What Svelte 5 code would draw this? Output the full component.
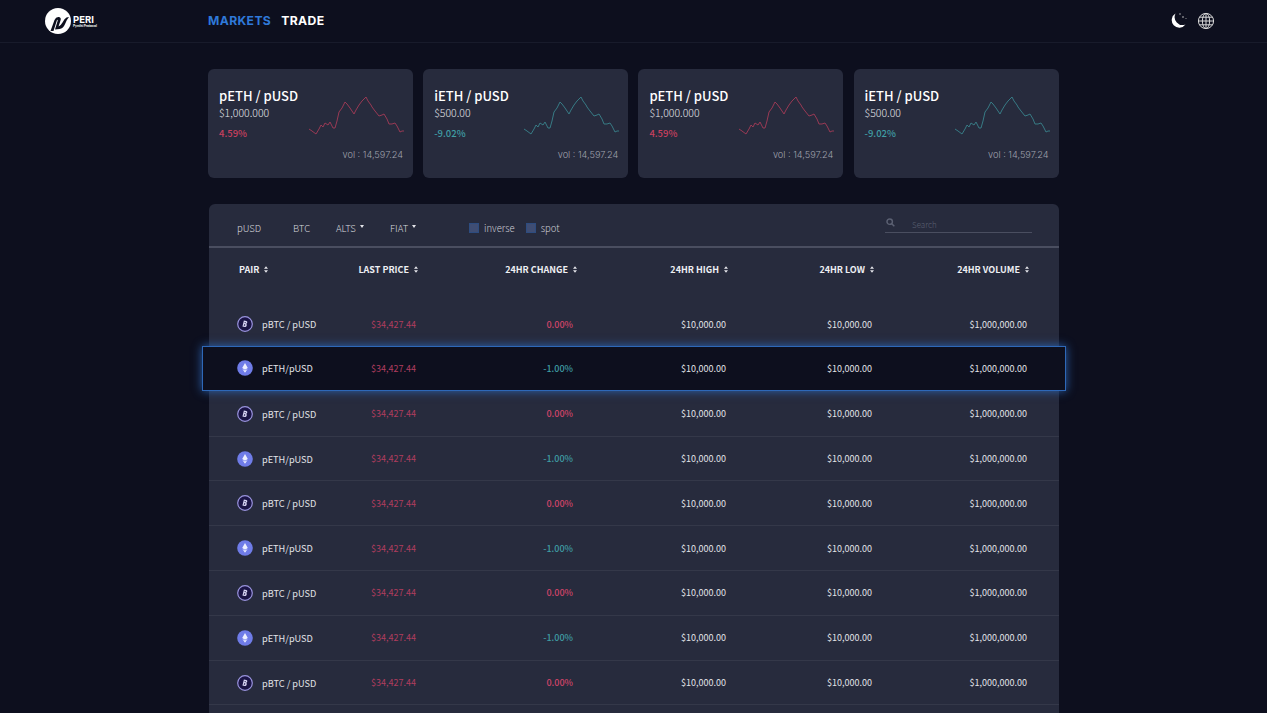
<script>
	const cards = [
		{ pair: 'pETH / pUSD', price: '$1,000.000', change: '4.59%', up: true },
		{ pair: 'iETH / pUSD', price: '$500.00', change: '-9.02%', up: false },
		{ pair: 'pETH / pUSD', price: '$1,000.000', change: '4.59%', up: true },
		{ pair: 'iETH / pUSD', price: '$500.00', change: '-9.02%', up: false }
	];

	const columns = ['PAIR', 'LAST PRICE', '24HR CHANGE', '24HR HIGH', '24HR LOW', '24HR VOLUME'];

	const rows = [];
	for (let i = 0; i < 9; i++) {
		const btc = i % 2 === 0;
		rows.push({
			btc,
			pair: btc ? 'pBTC / pUSD' : 'pETH/pUSD',
			change: btc ? '0.00%' : '-1.00%',
			active: i === 1
		});
	}

	const spark = '0,34 3,36 7,39 10,34 12,30 14,32 16,28 19,30 21,27 24,33 26,33 28,26 30,17 33,13 36,7 38,9 41,13 45,19 47,15 50,10 53,6 57,2 59,6 62,10 63,12 66,16 70,21 73,20 75,19 78,24 80,29 83,29 86,28 88,31 91,37 93,36 95,36';
</script>

<div class="page">
	<header class="topbar">
		<div class="logo">
			<svg width="28" height="28" viewBox="0 0 28 28">
				<circle cx="14" cy="14" r="13" fill="#fff" />
				<path d="M6.5 24 L10.5 13 Q12 9.5 15 10 Q17.5 10.5 16.5 13.5 L14.5 19.5 Q16.5 19 18.5 15.5 Q20.5 11.5 22.5 10.5 L25 10 Q22.8 12.5 21.3 16.5 Q19.3 21.5 15.5 22 L11 22.6 L13.6 14 Q14 12.4 13 13 L9.5 24 Z" fill="#0d0f1e" />
			</svg>
			<div class="logo-text">
				<span class="logo-name">PERI</span>
				<span class="logo-sub">Pynthi Protocol</span>
			</div>
		</div>
		<nav class="nav">
			<a class="active" href="#markets">MARKETS</a>
			<a href="#trade">TRADE</a>
		</nav>
		<div class="tools">
			<svg width="20" height="20" viewBox="0 0 20 20">
				<path d="M7.5 2.5 A7.6 7.6 0 1 0 17.5 13.5 A8 8 0 0 1 7.5 2.5 Z" fill="#fff" />
				<circle cx="12" cy="3" r="0.7" fill="#ccc" />
				<circle cx="15" cy="6" r="0.8" fill="#ccc" />
				<circle cx="18" cy="7.5" r="0.6" fill="#999" />
			</svg>
			<svg width="18" height="18" viewBox="0 0 18 18" fill="none" stroke="#d8d8d8" stroke-width="1">
				<circle cx="9" cy="9" r="7.6" />
				<ellipse cx="9" cy="9" rx="3.6" ry="7.6" />
				<path d="M9 1.4 V16.6 M1.4 9 H16.6 M2.6 5.2 H15.4 M2.6 12.8 H15.4" />
			</svg>
		</div>
	</header>

	<main class="content">
		<section class="cards">
			{#each cards as card}
				<article class="card">
					<div class="card-info">
						<h3>{card.pair}</h3>
						<p class="price">{card.price}</p>
						<p class="pct" class:up={card.up} class:down={!card.up}>{card.change}</p>
					</div>
					<svg class="spark" class:up={card.up} class:down={!card.up} width="96" height="40" viewBox="0 0 96 40">
						<polyline points={spark} fill="none" stroke="currentColor" stroke-width="1" />
					</svg>
					<span class="vol">vol : 14,597.24</span>
				</article>
			{/each}
		</section>

		<section class="panel">
			<div class="toolbar">
				<div class="tabs">
					<span class="tab pusd">pUSD</span>
					<span class="tab btc">BTC</span>
					<span class="tab alts">ALTS<i class="caret"></i></span>
					<span class="tab fiat">FIAT<i class="caret"></i></span>
				</div>
				<label class="check"><i class="box"></i>inverse</label>
				<label class="check"><i class="box"></i>spot</label>
				<div class="search">
					<svg width="9" height="9" viewBox="0 0 11 11" fill="none" stroke="#5b6072" stroke-width="1.8">
						<circle cx="4.5" cy="4.5" r="3.3" />
						<path d="M7 7 L10.2 10.2" />
					</svg>
					<span>Search</span>
				</div>
			</div>

			<div class="thead">
				{#each columns as col}
					<div class="th">
						{col}
						<svg width="4" height="7" viewBox="0 0 5 8" fill="#e4e5ea">
							<path d="M2.5 0 L5 3 H0 Z M2.5 8 L5 5 H0 Z" />
						</svg>
					</div>
				{/each}
			</div>

			<div class="tbody">
				{#each rows as row}
					<div class="row" class:active={row.active}>
						<div class="pair">
							{#if row.btc}
								<svg class="coin" width="16" height="16" viewBox="0 0 16 16">
									<circle cx="8" cy="8" r="7.3" fill="#1b1446" stroke="#9a94de" stroke-width="1.2" />
									<g transform="rotate(12 8 8)">
										<path d="M6.2 4.9 H8.6 Q10 5 9.9 6.2 Q9.8 7.2 9 7.6 Q10.2 8 10 9.4 Q9.8 10.9 8.3 10.9 H6 Z" fill="#d9d6f6" />
										<path d="M7.4 6 H8.3 V7.1 H7.3 Z M7.2 8.3 H8.4 V9.7 H7 Z" fill="#1b1446" />
									</g>
								</svg>
							{:else}
								<svg class="coin" width="16" height="16" viewBox="0 0 16 16">
									<circle cx="8" cy="8" r="7.8" fill="#6f7ce8" />
									<path d="M8 3 L10.8 8 L8 9.7 L5.2 8 Z M5.4 9 L8 10.6 L10.6 9 L8 12.8 Z" fill="#eef0ff" />
								</svg>
							{/if}
							<span>{row.pair}</span>
						</div>
						<div class="cell red">$34,427.44</div>
						<div class="cell change" class:loss={row.btc} class:teal={!row.btc}>{row.change}</div>
						<div class="cell">$10,000.00</div>
						<div class="cell">$10,000.00</div>
						<div class="cell">$1,000,000.00</div>
					</div>
				{/each}
			</div>
		</section>
	</main>
</div>

<style>
	:global(body) {
		background: #0d0f1e;
		overflow: hidden;
	}

	.page {
		height: 713px;
		overflow: hidden;
		color: #e6e7ec;
		font-family: 'Noto Sans CJK KR', 'Noto Sans', sans-serif;
	}

	.topbar {
		display: flex;
		align-items: center;
		height: 42px;
		padding: 0 52px 0 44px;
		border-bottom: 1px solid #181b2b;
	}

	.logo {
		display: flex;
		align-items: center;
		gap: 1px;
		width: 164px;
	}

	.logo-text {
		display: flex;
		flex-direction: column;
		gap: 1px;
		line-height: 1;
		color: #fff;
		padding-top: 1px;
	}

	.logo-name {
		font-size: 9.5px;
		font-weight: 700;
		font-family: Inter, sans-serif;
	}

	.logo-sub {
		font-size: 3.2px;
		font-weight: 700;
		font-family: Inter, sans-serif;
	}

	.nav {
		display: flex;
		gap: 10px;
		margin-top: -2px;
		font-family: Inter, sans-serif;
		font-size: 12.2px;
		font-weight: 700;
		letter-spacing: 0.35px;
	}

	.nav a {
		color: #fff;
		text-decoration: none;
	}

	.nav a.active {
		color: #2f79d9;
	}

	.tools {
		display: flex;
		align-items: center;
		gap: 9px;
		margin-left: auto;
	}

	.content {
		display: flex;
		flex-direction: column;
		width: 851px;
		margin-left: 208px;
		padding-top: 26px;
	}

	.cards {
		display: flex;
		gap: 10.2px;
	}

	.card {
		position: relative;
		display: flex;
		width: 205px;
		height: 109px;
		padding: 18px 11px 0;
		background: #272b3d;
		border-radius: 6px;
		box-sizing: border-box;
	}

	.card-info h3 {
		margin: 0;
		font-size: 13px;
		line-height: 18px;
		font-weight: 500;
		color: #fff;
	}

	.price {
		margin: 0;
		font-size: 10.5px;
		line-height: 16px;
		font-weight: 300;
		color: #e2e3e8;
	}

	.pct {
		margin: 5px 0 0;
		font-size: 9.5px;
		line-height: 15px;
		font-weight: 500;
	}

	.up {
		color: #c9405f;
	}

	.down {
		color: #3f9da4;
	}

	.spark {
		position: absolute;
		left: 101px;
		top: 26px;
		opacity: 0.7;
	}

	.vol {
		position: absolute;
		right: 10px;
		bottom: 18px;
		font-family: Inter, sans-serif;
		font-size: 9.2px;
		font-weight: 300;
		color: #a0a2ad;
	}

	.panel {
		margin-top: 26px;
		margin-left: 1px;
		width: 850px;
		padding-bottom: 40px;
		background: #272b3d;
		border-radius: 6px 6px 0 0;
	}

	.toolbar {
		display: flex;
		align-items: center;
		height: 37px;
		padding: 5px 0 0 28px;
		border-bottom: 2px solid #4a4e60;
		font-size: 9.5px;
		font-weight: 300;
		color: #d6d7de;
	}

	.tabs {
		display: flex;
		width: 232px;
	}

	.tab {
		display: inline-flex;
		align-items: center;
	}

	.pusd {
		width: 56px;
	}

	.btc {
		width: 43px;
	}

	.alts {
		width: 54px;
	}

	.caret {
		margin-left: 4px;
		margin-bottom: 2px;
		border-left: 2px solid transparent;
		border-right: 2px solid transparent;
		border-top: 3px solid #e4e5ea;
	}

	.check {
		display: flex;
		align-items: center;
		gap: 5px;
		margin-right: 11px;
		color: #c9cad2;
	}

	.box {
		width: 10px;
		height: 10px;
		background: #3f4d73;
		border: 1px solid #2d4c80;
		box-sizing: border-box;
	}

	.search {
		display: flex;
		align-items: center;
		gap: 17px;
		width: 147px;
		height: 17px;
		margin-left: auto;
		margin-right: 27px;
		margin-bottom: 6px;
		padding-left: 1px;
		border-bottom: 1px solid #4a4e60;
		font-size: 8px;
		color: #5b6072;
		box-sizing: border-box;
	}

	.search svg {
		margin-bottom: 3px;
	}

	.thead,
	.row {
		display: grid;
		grid-template-columns: 100px 81px 157px 153px 146px 155px;
		align-items: center;
		padding: 0 31px 0 28px;
	}

	.thead {
		height: 43px;
		margin-bottom: 11.3px;
	}

	.th {
		display: flex;
		align-items: center;
		justify-content: flex-end;
		gap: 5px;
		font-size: 9px;
		font-weight: 700;
		color: #eeeff3;
	}

	.th:nth-child(3) {
		transform: translateX(2px);
	}

	.th:first-child {
		justify-content: flex-start;
		padding-left: 2px;
	}

	.tbody {
		display: flex;
		flex-direction: column;
	}

	.row {
		position: relative;
		height: 44.8px;
		font-size: 9px;
		font-weight: 400;
		color: #e2e3e8;
		border-bottom: 1px solid #343849;
		box-sizing: border-box;
	}

	.row.active {
		width: 864px;
		margin: -1px 0 1px -7px;
		padding: 0 37px 0 34px;
		background: #0d0f1e;
		border: 1px solid #2e68b8;
		box-shadow: 0 0 9px #2a62b0;
	}

	.pair {
		display: flex;
		align-items: center;
		gap: 9px;
		font-size: 9.2px;
	}

	.cell {
		text-align: right;
		padding-right: 2px;
	}

	.red {
		color: #b03d5e;
	}

	.change {
		font-weight: 500;
	}

	.loss {
		color: #cf4468;
	}

	.teal {
		color: #3f9da4;
	}
</style>
